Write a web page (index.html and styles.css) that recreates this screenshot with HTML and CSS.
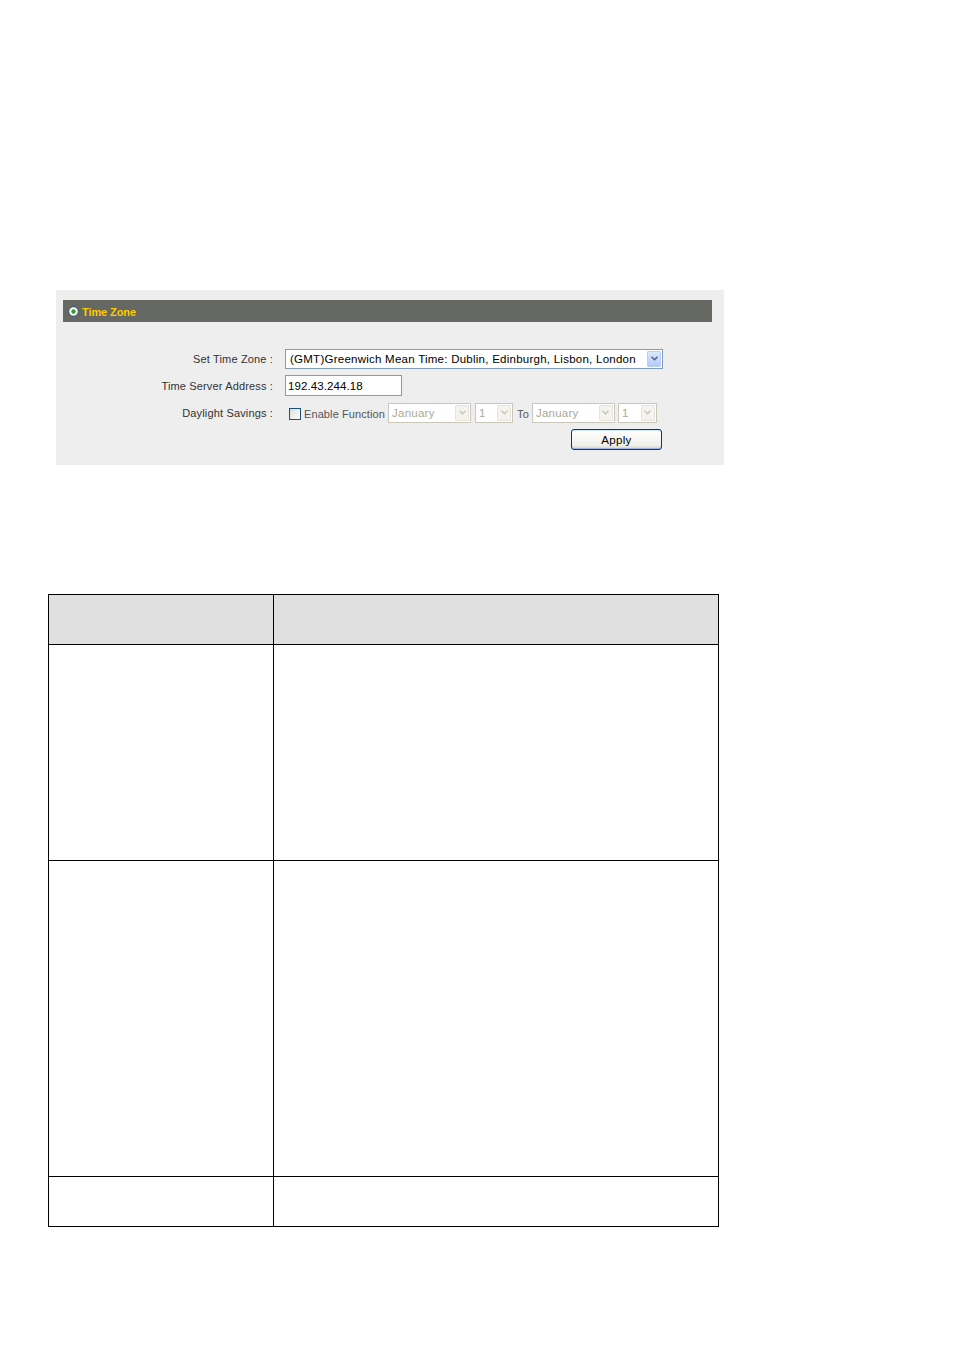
FILE: index.html
```html
<!DOCTYPE html>
<html>
<head>
<meta charset="utf-8">
<title>Time Zone</title>
<link rel="stylesheet" href="styles.css">
</head>
<body>
<div class="page">
  <div class="panel">
    <div class="bar">
      <svg class="bullet" width="11" height="11" viewBox="0 0 11 11">
        <circle cx="5.5" cy="5.5" r="4.8" fill="#ffffff" stroke="#2c4a6e" stroke-width="1"/>
        <circle cx="5.5" cy="5.5" r="2.2" fill="#2aa02a"/>
      </svg>
      <span class="bar-title">Time Zone</span>
    </div>
    <div class="form">
      <div class="label">Set Time Zone :</div>
      <div class="ctrl">
        <div class="select tz">
          <span class="sel-text">(GMT)Greenwich Mean Time: Dublin, Edinburgh, Lisbon, London</span>
          <span class="arrow"><svg width="7" height="5" viewBox="0 0 7 5"><path d="M0.5 0.8 L3.5 3.8 L6.5 0.8" fill="none" stroke="#4d6185" stroke-width="1.5"/></svg></span>
        </div>
      </div>
      <div class="label">Time Server Address :</div>
      <div class="ctrl">
        <div class="input">192.43.244.18</div>
      </div>
      <div class="label">Daylight Savings :</div>
      <div class="ctrl dl">
        <span class="check"></span>
        <span class="enable">Enable Function</span>
        <div class="select dis month"><span class="sel-text">January</span><span class="arrow dis-arrow"><svg width="7" height="5" viewBox="0 0 7 5"><path d="M0.5 0.8 L3.5 3.8 L6.5 0.8" fill="none" stroke="#c9c7ba" stroke-width="1.5"/></svg></span></div>
        <div class="select dis day"><span class="sel-text">1</span><span class="arrow dis-arrow"><svg width="7" height="5" viewBox="0 0 7 5"><path d="M0.5 0.8 L3.5 3.8 L6.5 0.8" fill="none" stroke="#c9c7ba" stroke-width="1.5"/></svg></span></div>
        <span class="to">To</span>
        <div class="select dis month"><span class="sel-text">January</span><span class="arrow dis-arrow"><svg width="7" height="5" viewBox="0 0 7 5"><path d="M0.5 0.8 L3.5 3.8 L6.5 0.8" fill="none" stroke="#c9c7ba" stroke-width="1.5"/></svg></span></div>
        <div class="select dis day2"><span class="sel-text">1</span><span class="arrow dis-arrow"><svg width="7" height="5" viewBox="0 0 7 5"><path d="M0.5 0.8 L3.5 3.8 L6.5 0.8" fill="none" stroke="#c9c7ba" stroke-width="1.5"/></svg></span></div>
      </div>
      <div class="label"></div>
      <div class="ctrl btn-row">
        <div class="apply">Apply</div>
      </div>
    </div>
  </div>

  <table class="desc">
    <tr class="head"><td class="c1"></td><td class="c2"></td></tr>
    <tr class="r1"><td class="c1"></td><td class="c2"></td></tr>
    <tr class="r2"><td class="c1"></td><td class="c2"></td></tr>
    <tr class="r3"><td class="c1"></td><td class="c2"></td></tr>
  </table>
</div>
</body>
</html>
```

FILE: styles.css
```css
html, body {
  margin: 0;
  padding: 0;
  background: #ffffff;
}
.page {
  width: 954px;
  min-height: 1350px;
  padding-top: 290px;
  box-sizing: border-box;
  font-family: "Liberation Sans", Arial, sans-serif;
}
.panel {
  margin-left: 56px;
  width: 668px;
  height: 175px;
  background: #eeeeee;
  padding: 10px 12px 0 7px;
  box-sizing: border-box;
}
.bar {
  height: 22px;
  background: #666864;
  display: flex;
  align-items: center;
  padding-left: 5px;
  gap: 3px;
}
.bullet {
  display: block;
}
.bar-title {
  color: #ffcc00;
  font-weight: bold;
  font-size: 11px;
  letter-spacing: -0.1px;
  margin-top: 1px;
}
.form {
  margin-top: 23px;
  display: grid;
  grid-template-columns: 210px 1fr;
  column-gap: 12px;
  grid-auto-rows: 27px;
  font-size: 11px;
  letter-spacing: 0.15px;
  color: #333333;
}
.label {
  text-align: right;
  display: flex;
  align-items: center;
  justify-content: flex-end;
  padding-top: 1px;
}
.ctrl {
  display: flex;
  align-items: center;
}
.select {
  height: 20px;
  box-sizing: border-box;
  border: 1px solid #7f9db9;
  background: #ffffff;
  display: flex;
  align-items: center;
  justify-content: space-between;
  padding: 0 1px 0 4px;
  color: #000000;
  font-size: 11.5px;
  letter-spacing: 0.25px;
}
.tz {
  width: 378px;
}
.arrow {
  width: 14px;
  height: 16px;
  box-sizing: border-box;
  border: 1px solid #b8cdf8;
  background: linear-gradient(#dce8ff, #b5cbf6);
  border-radius: 1px;
  display: flex;
  align-items: center;
  justify-content: center;
}
.input {
  width: 117px;
  height: 21px;
  box-sizing: border-box;
  border: 1px solid #7f9db9;
  background: #ffffff;
  padding: 4px 0 0 2px;
  color: #000000;
  font-size: 11.5px;
  letter-spacing: 0.1px;
}
.dl {
  padding-left: 4px;
}
.check {
  width: 12px;
  height: 12px;
  box-sizing: border-box;
  border: 1px solid #1c5180;
  background: linear-gradient(135deg, #dcdcd7, #ffffff);
  margin-right: 3px;
  margin-top: 2px;
}
.enable {
  color: #555555;
  margin-right: 3px;
  margin-top: 3px;
  letter-spacing: 0.1px;
}
.dis {
  border-color: #c9c7ba;
  color: #aca899;
  padding-left: 3px;
}
.dis-arrow {
  border-color: #e6e4dc;
  background: #f4f3ee;
}
.month {
  width: 83px;
}
.day {
  width: 38px;
  margin-left: 4px;
}
.day2 {
  width: 39px;
  margin-left: 3px;
}
.to {
  color: #555555;
  margin: 3px 3px 0 4px;
}
.btn-row {
  justify-content: flex-start;
  padding-left: 286px;
}
.apply {
  width: 91px;
  height: 21px;
  box-sizing: border-box;
  border: 1px solid #003c74;
  border-radius: 3px;
  background: linear-gradient(#ffffff, #f0f0ea 80%, #d6d0c5);
  box-shadow: inset 0 -1px 0 #9fb6e2, inset 0 1px 0 #cee7ff;
  color: #000000;
  font-size: 11.5px;
  display: flex;
  align-items: center;
  justify-content: center;
  letter-spacing: 0.3px;
}
.desc {
  margin-left: 48px;
  margin-top: 129px;
  border-collapse: collapse;
  width: 671px;
  table-layout: fixed;
}
.desc td {
  border: 1px solid #000000;
  padding: 0;
}
.desc .c1 {
  width: 224px;
}
.desc .head td {
  background: #e0e0e0;
  height: 49px;
}
.desc .r1 td {
  height: 215px;
}
.desc .r2 td {
  height: 315px;
}
.desc .r3 td {
  height: 49px;
}
```
